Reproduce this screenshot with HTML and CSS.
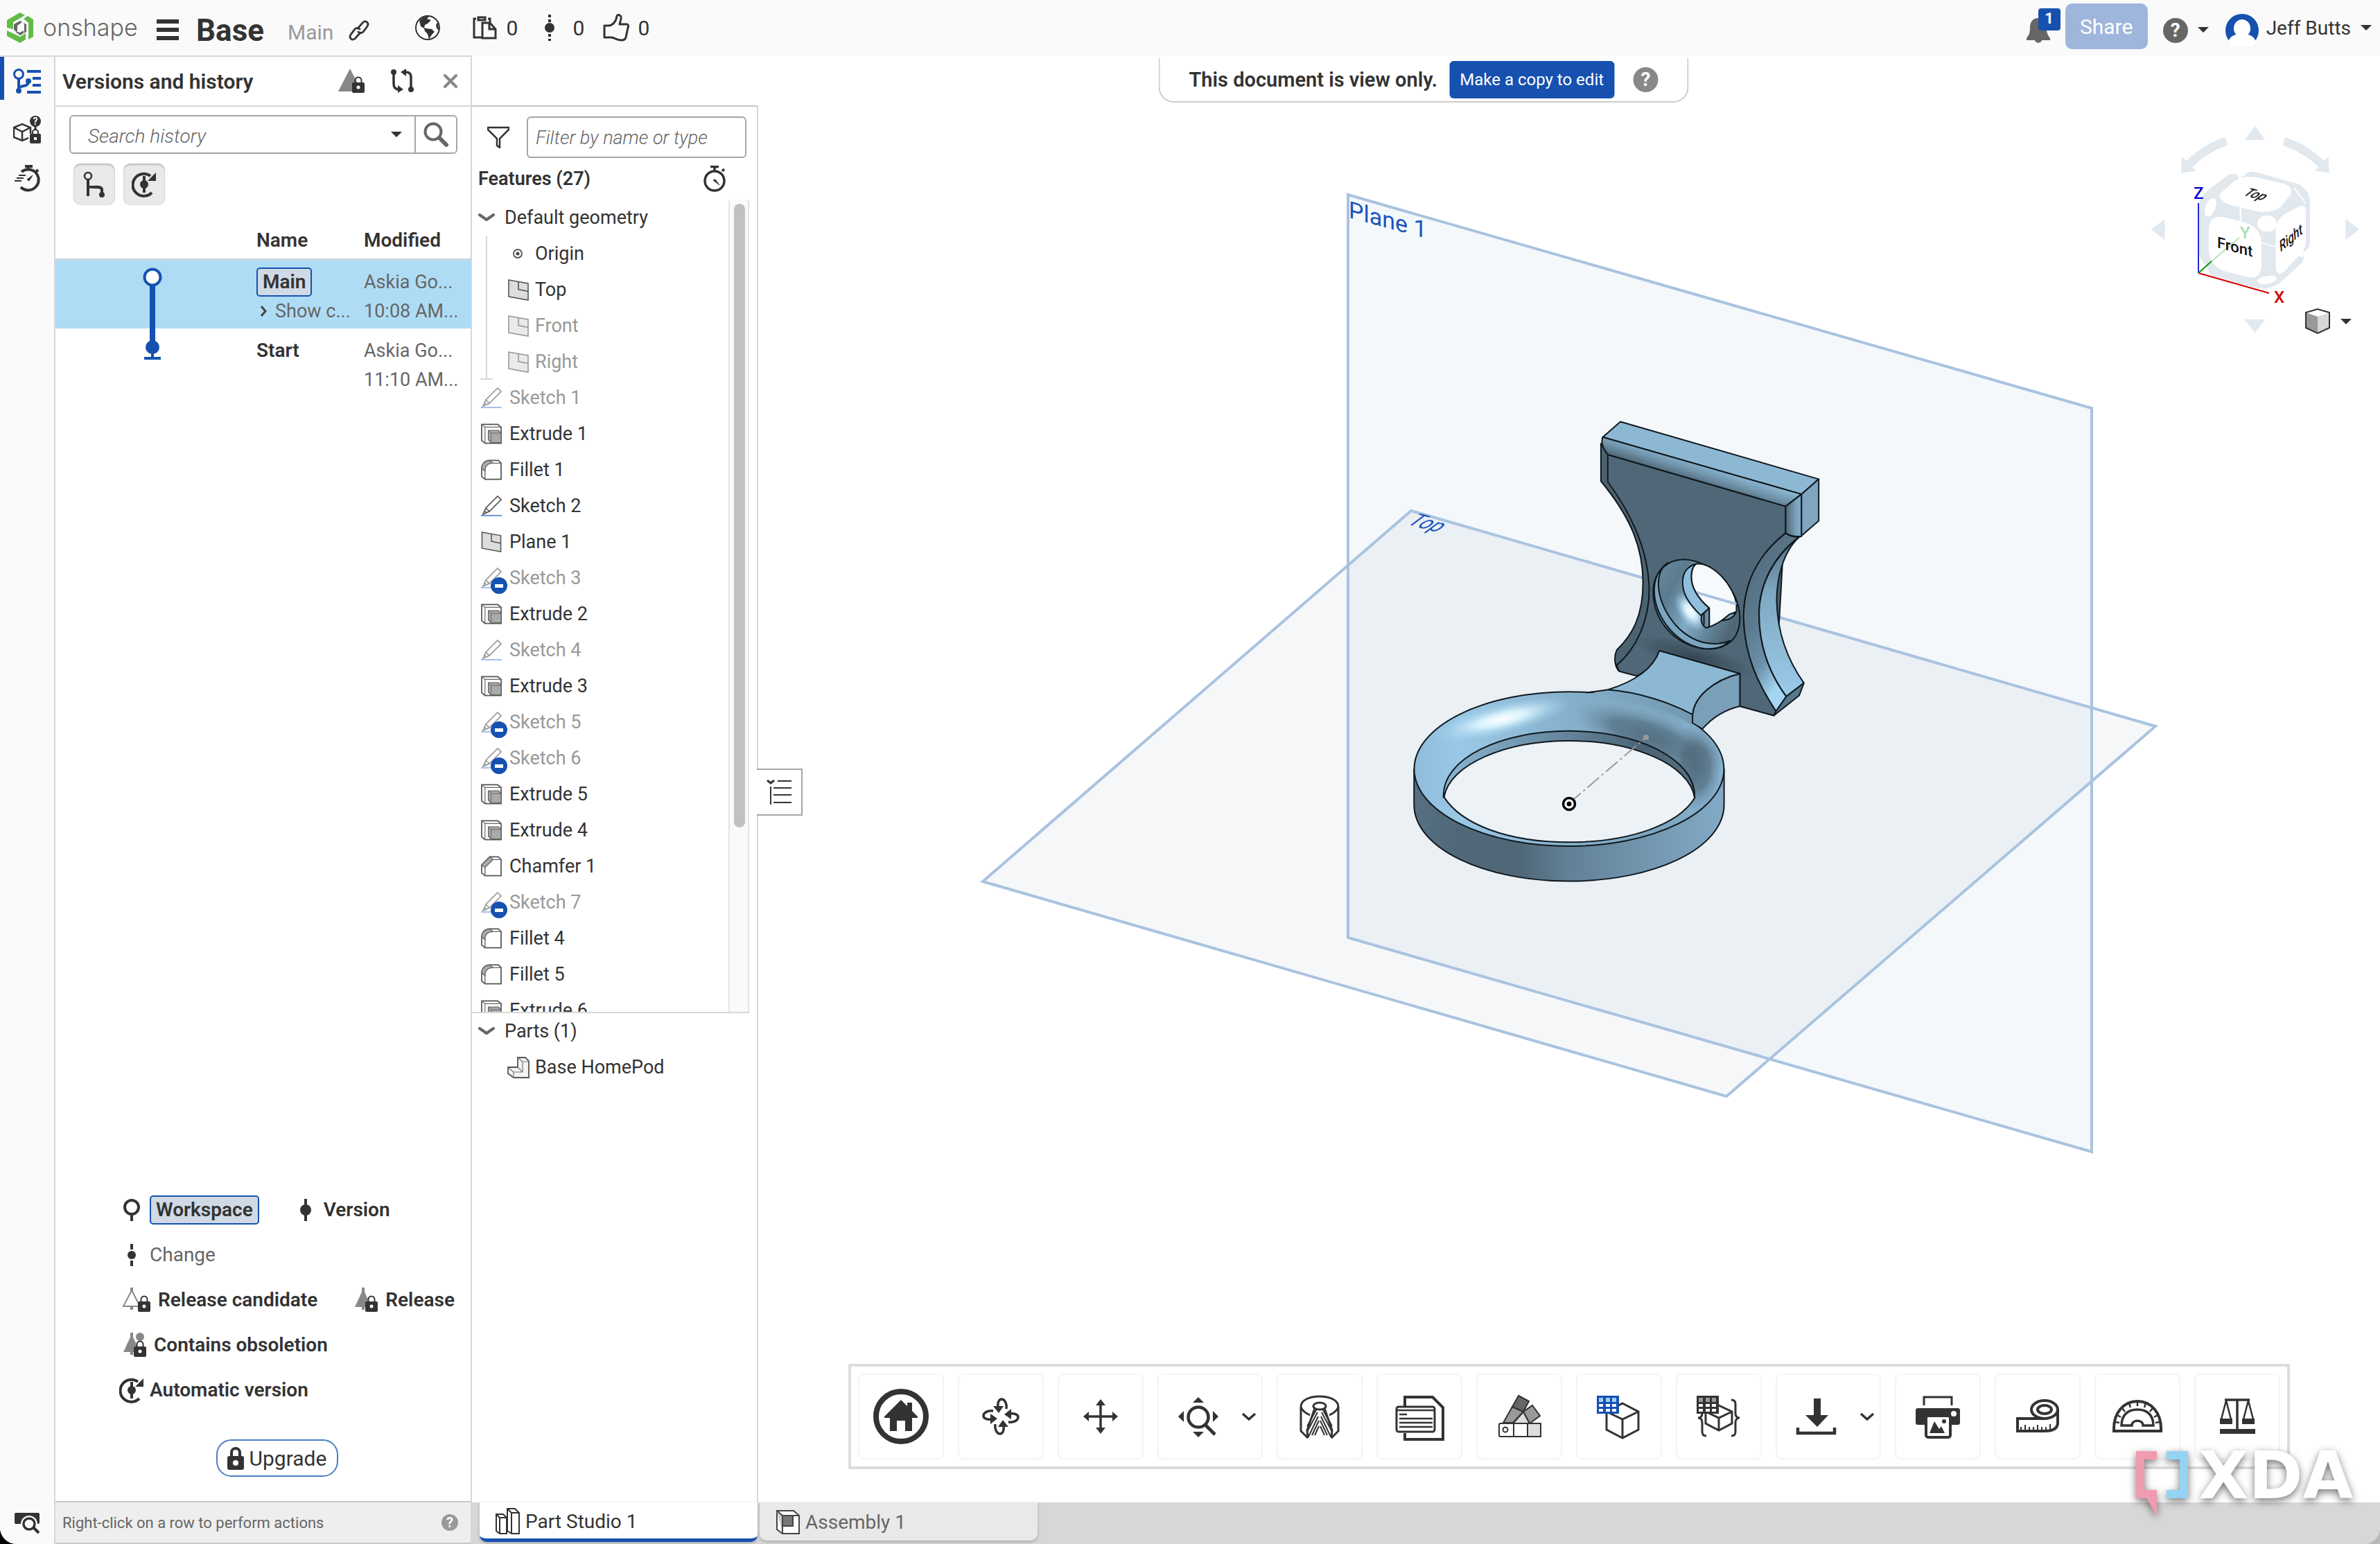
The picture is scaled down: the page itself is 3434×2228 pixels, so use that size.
FILE: index.html
```html
<!DOCTYPE html>
<html lang="en">
<head>
<meta charset="utf-8">
<title>Base | Part Studio 1</title>
<link rel="stylesheet" href="styles.css">
</head>
<body>
<svg class="sprite" aria-hidden="true">
  <defs>
    <symbol id="i-plane" viewBox="0 0 30 31"><path d="M1 1l28 5v24L1 25z" fill="#ddd" stroke="currentColor" stroke-width="1.6"/><path d="M15 3.500v11l14 3" fill="none" stroke="currentColor" stroke-width="1.600"/></symbol>
    <symbol id="i-sketch" viewBox="0 0 30 30"><path d="M3 27l4-9L24 1l5 5-17 17zM7 18l5 5M5 22l3 3" fill="none" stroke="currentColor" stroke-width="1.700"/><path d="M0 29h30" stroke="#4a7fd0" stroke-width="1.600"/></symbol>
    <symbol id="i-extrude" viewBox="0 0 31 30"><path d="M1 1h24l5 4v24H6l-5-4z" fill="#fff" stroke="#555" stroke-width="1.800"/><path d="M1 1l5 4v24M6 5h24" fill="none" stroke="#666" stroke-width="1.200"/><path d="M11 10h15l4 4v14H15l-4-4z" fill="#aaa" stroke="#666" stroke-width="1.400"/><path d="M11 10l4 4v14M15 14h15" fill="none" stroke="#666"/></symbol>
    <symbol id="i-fillet" viewBox="0 0 31 30"><path d="M1 14C1 6 6 1 13 1h13l4 4v24H6l-5-4z" fill="#fff" stroke="#555" stroke-width="1.800"/><path d="M1 13C1 6 6 1 13 1l5 4C10 5 6 9 6 17z" fill="#aaa" stroke="#666" stroke-width="1.400"/><path d="M17 5h13M6 16v13" stroke="#666" stroke-width="1.400"/></symbol>
    <symbol id="i-chamfer" viewBox="0 0 31 30"><path d="M1 13L13 1h13l4 4v24H6l-5-4z" fill="#fff" stroke="#555" stroke-width="1.800"/><path d="M1 13L13 1l5 4L6 17z" fill="#aaa" stroke="#666" stroke-width="1.400"/><path d="M17 5h13M6 16v13" stroke="#666" stroke-width="1.400"/></symbol>
    <symbol id="i-part" viewBox="0 0 32 31"><path d="M1 15h14V1h11l5 5v24H9l-8-6z" fill="#f3f3f3" stroke="#555" stroke-width="1.800"/><path d="M1 15l8 7v8M9 22h13V7h9M15 1l7 6M15 15l7 7" fill="none" stroke="#777" stroke-width="1.200"/></symbol>
    <symbol id="i-lock" viewBox="0 0 18 24"><path d="M4.500 11V6a4.500 4.500 0 0 1 9 0v5" fill="none" stroke="#333" stroke-width="2"/><rect y="9" width="18" height="15" rx="2" fill="#333"/><circle cx="9" cy="16" r="2.500" fill="#fff"/></symbol>
    <symbol id="i-auto" viewBox="0 0 36 38"><path d="M29 31A16 16 0 1 1 27 7" fill="none" stroke="#333" stroke-width="4"/><path d="M35 2v12H23z" fill="#333"/><path d="M18 7v24" stroke="#333" stroke-width="4"/><circle cx="18" cy="19" r="6" fill="#333"/></symbol>
    <symbol id="i-chev" viewBox="0 0 24 14"><path d="M2 3l10 7 10-7" fill="none" stroke="#666" stroke-width="4" stroke-linecap="round" stroke-linejoin="round"/></symbol>
    <symbol id="i-watch" viewBox="0 0 34 38"><circle cx="17" cy="22" r="14" fill="none" stroke="#333" stroke-width="3.500"/><path d="M11 1.500h12M17 2v6M28 8l3-3" stroke="#333" stroke-width="3.500"/><path d="M15 21l3-1 6 8z" fill="#333" stroke="#333"/></symbol>
  </defs>
</svg>
<div class="app">
  <header class="topbar">
    <a class="brand" href="#"><svg width="40" height="44" viewBox="0 0 40 44"><path d="M1 22V11L20 0l7 4-17 10v10z" fill="#62bb46"/><path d="M25 9l6-4 8 5v25l-7 4V15z" fill="#62bb46"/><path d="M1 26l19 9 8-5v9l-8 5L1 34z" fill="#62bb46"/><path d="M11 17l9-5 3 2-7 5v9l-5-3zM25 15l4 2v11l-3 2V18zM12 27l8 2 5-3v4l-5 3z" fill="#666"/></svg><span>onshape</span></a>
    <button class="plain menu" aria-label="Menu"><svg width="32" height="30"><path d="M0 3h32M0 15h32M0 27h32" stroke="#333" stroke-width="6"/></svg></button>
    <h1>Base</h1><span class="branch">Main</span>
    <button class="plain link" aria-label="Copy link"><svg width="30" height="30" viewBox="0 0 30 30" fill="none" stroke="#333" stroke-width="2.800" stroke-linecap="round"><path d="M13 12l8-9c4-3 9 1 6 6l-6 8c-2 2-5 2-7 0"/><path d="M17 18l-8 9c-4 3-9-1-6-6l6-8c2-2 5-2 7 0"/></svg></button>
    <svg class="globe" width="38" height="38" viewBox="0 0 38 38"><circle cx="19" cy="19" r="17" fill="#fff" stroke="#333" stroke-width="2"/><path d="M7 9c4-5 9-7 14-6l-3 3 6 2-5 5-4 2-1 4 3 1 8 1 4 4-4 4-4 7-2-8-4-4-1-4-5-3z" fill="#333"/><path d="M34 10l-3 5 1 5 3 3z" fill="#333"/></svg>
    <span class="stat"><svg width="36" height="34" viewBox="0 0 36 34" fill="none" stroke="#333" stroke-width="3"><path d="M5 4H2v27h12M22 4h3v5"/><path d="M8 2h10v4H8z"/><path d="M14 10h11l8 9v13H14zM24 10v9h9"/></svg>0</span>
    <span class="stat stat-b"><svg width="14" height="38" viewBox="0 0 14 38"><path d="M7 0v38" stroke="#333" stroke-width="4" stroke-dasharray="4 3"/><circle cx="7" cy="19" r="7" fill="#333"/></svg>0</span>
    <span class="stat stat-c"><svg width="38" height="40" viewBox="0 0 38 40"><path d="M2 17h6c5 0 11-5 12-14 2-3 7-1 6 4l-2 8h11c2 1 2 3 1 5l-3 14c-1 3-3 4-6 4-6 0-10-3-14-4H2z" fill="none" stroke="#333" stroke-width="3" stroke-linejoin="round"/></svg>0</span>
    <span class="spacer"></span>
    <button class="plain bell" aria-label="Notifications"><svg width="34" height="36" viewBox="0 0 34 36"><path d="M17 0c-8 0-12 6-12 13 0 8-1 11-5 16v3h12c1 5 9 5 10 0h12v-3c-4-5-5-8-5-16C29 6 25 0 17 0z" fill="#666"/></svg><span class="badge">1</span></button>
    <button class="share">Share</button>
    <button class="help dark" aria-label="Help">?</button><i class="caret"></i>
    <svg class="avatar" width="48" height="48" viewBox="0 0 48 48"><circle cx="24" cy="24" r="24" fill="#1651b0"/><path d="M4 42c1-9 8-13 20-13s19 4 20 13c-8 8-32 8-40 0z" fill="#fff"/><ellipse cx="24" cy="21" rx="12" ry="13" fill="#fff"/></svg>
    <button class="plain user">Jeff Butts</button><i class="caret"></i>
  </header>
  <div class="main">
    <nav class="rail">
      <button class="plain active" aria-label="Versions and history"><svg width="40" height="40" viewBox="0 0 40 40" stroke="#1651b0" fill="none"><circle cx="8" cy="10" r="6.500" stroke-width="3"/><path d="M8 17v18M8 31c1-6 13-1 14-10" stroke-width="4"/><circle cx="8" cy="34" r="4" fill="#1651b0" stroke="none"/><circle cx="22" cy="20" r="4" fill="#1651b0" stroke="none"/><path d="M20 6h20M28 16h12M28 26h12M20 36h20" stroke-width="4"/></svg></button>
      <button class="plain" aria-label="Part lookup"><svg width="40" height="40" viewBox="0 0 40 40"><path d="M1 17l12-5 12 5v14l-12 5-12-5zM1 17l12 6 12-6M13 23v13" fill="none" stroke="#333" stroke-width="2.500"/><path d="M22 26h18v14H22z" fill="#fafafa"/><circle cx="32" cy="8" r="8" fill="#333"/><text x="32" y="13" class="tiny-q">?</text><path d="M32 16v4" stroke="#333" stroke-width="3"/><path d="M28 28v-4a4 4 0 0 1 8 0v4" fill="none" stroke="#333" stroke-width="2"/><rect x="24" y="26" width="16" height="14" rx="2" fill="#333"/><rect x="30" y="31" width="4" height="4" fill="#fff"/></svg></button>
      <button class="plain" aria-label="Performance"><svg width="40" height="40" viewBox="0 0 40 40"><path d="M12 11A15 15 0 1 1 11 33" fill="none" stroke="#333" stroke-width="4"/><path d="M17 3h11M22 3v5M33 11l3-3" stroke="#333" stroke-width="4"/><path d="M8 16h10M5 20h10M2 24h10" stroke="#333" stroke-width="2"/><path d="M20 22l8-6-5 8z" fill="#333" stroke="#333"/></svg></button>
      <button class="plain rail-end" aria-label="Tab search"><svg width="38" height="34" viewBox="0 0 38 34"><rect x="1" y="2" width="36" height="16" rx="2" fill="#333"/><circle cx="22" cy="18" r="12" fill="#fafafa"/><circle cx="22" cy="18" r="8" fill="none" stroke="#333" stroke-width="3.500"/><path d="M28 23l8 8" stroke="#333" stroke-width="4"/></svg></button>
    </nav>
    <aside class="versions">
      <div class="vhead"><h2>Versions and history</h2>
        <svg width="40" height="36" viewBox="0 0 40 36"><path d="M17 0l17 33H0z" fill="#888"/><use href="#i-lock" x="20" y="11" width="18" height="24"/></svg>
        <svg class="cmp" width="34" height="36" viewBox="0 0 34 36" fill="none" stroke="#333" stroke-width="3.500"><path d="M4 4v18q0 8 8 8M29 30V12q0-7-8-7"/><circle cx="4" cy="5" r="4" fill="#333" stroke="none"/><circle cx="29" cy="30" r="4" fill="#333" stroke="none"/><path d="M10 24l8 6-8 5zM22 0l-8 5 8 6z" fill="#333" stroke="none"/></svg>
        <button class="plain close" aria-label="Close"><svg width="20" height="20"><path d="M2 2l16 16M18 2L2 18" stroke="#888" stroke-width="4" stroke-linecap="round"/></svg></button>
      </div>
      <div class="search"><input type="text" placeholder="Search history" aria-label="Search history"><i class="caret"></i><button class="plain" aria-label="Search"><svg width="38" height="38" viewBox="0 0 38 38" fill="none" stroke="#666"><circle cx="15" cy="15" r="11.500" stroke-width="4"/><path d="M24 24l10 10" stroke-width="6" stroke-linecap="round"/></svg></button></div>
      <div class="toggles">
        <button aria-label="Show branches"><svg width="32" height="38" viewBox="0 0 32 38" fill="none" stroke="#333"><circle cx="7" cy="7" r="5" stroke-width="2.500"/><path d="M7 12v24M7 22c4 3 18-2 20 4v8" stroke-width="4"/><circle cx="27" cy="34" r="4" fill="#333" stroke="none"/></svg></button>
        <button aria-label="Show automatic versions"><svg width="36" height="38"><use href="#i-auto"/></svg></button>
      </div>
      <table class="history">
        <thead><tr><th class="graph"></th><th>Name</th><th>Modified</th></tr></thead>
        <tbody>
          <tr class="current"><td class="graph"><svg width="28" height="140" viewBox="0 0 28 140"><path d="M14 24v100" stroke="#1651b0" stroke-width="8"/><circle cx="14" cy="14" r="11.500" fill="#fff" stroke="#1651b0" stroke-width="4"/><circle cx="14" cy="115" r="10" fill="#1651b0"/><path d="M2 131h24" stroke="#1651b0" stroke-width="4"/><path d="M14 120v10" stroke="#1651b0" stroke-width="4"/></svg></td>
            <td><span class="tag">Main</span><br><svg class="more" width="10" height="18"><path d="M2 2l6 7-6 7" fill="none" stroke="#444" stroke-width="3"/></svg>Show c...</td><td>Askia Go...<br>10:08 AM...</td></tr>
          <tr><td></td><td><b>Start</b></td><td>Askia Go...<br>11:10 AM...</td></tr>
        </tbody>
      </table>
      <ul class="legend">
        <li><svg width="24" height="32" viewBox="0 0 24 32"><circle cx="12" cy="12" r="10" fill="none" stroke="#333" stroke-width="4"/><path d="M12 22v10" stroke="#333" stroke-width="4"/></svg><b class="tag">Workspace</b><svg class="second" width="16" height="32"><path d="M8 0v32" stroke="#333" stroke-width="4"/><circle cx="8" cy="16" r="8" fill="#333"/></svg><b>Version</b></li>
        <li><svg width="24" height="32"><path d="M12 0v8M12 24v8" stroke="#333" stroke-width="4"/><circle cx="12" cy="16" r="6" fill="#333"/></svg><span>Change</span></li>
        <li class="rel"><svg width="42" height="36" viewBox="0 0 42 36"><path d="M14 0v6M14 28v4" stroke="#888" stroke-width="4"/><path d="M14 4L2 27h24z" fill="#fff" stroke="#888" stroke-width="2"/><use href="#i-lock" x="23" y="11" width="18" height="24"/></svg><b>Release candidate</b><svg class="third" width="34" height="36" viewBox="0 0 34 36"><path d="M12 0v32" stroke="#888" stroke-width="4"/><path d="M12 2L0 28h24z" fill="#888"/><use href="#i-lock" x="15" y="11" width="18" height="24"/></svg><b>Release</b></li>
        <li class="obs"><svg width="34" height="36" viewBox="0 0 34 36"><path d="M12 0v32" stroke="#888" stroke-width="4"/><path d="M12 2L0 28h24z" fill="#888"/><circle cx="24" cy="6" r="6" fill="#888"/><use href="#i-lock" x="15" y="11" width="18" height="24"/></svg><b>Contains obsoletion</b></li>
        <li class="aut"><svg width="36" height="38"><use href="#i-auto"/></svg><b>Automatic version</b></li>
      </ul>
      <button class="upgrade"><svg width="24" height="34" viewBox="0 0 24 34"><path d="M6 16V9a6 6 0 0 1 12 0v7" fill="none" stroke="#333" stroke-width="4"/><rect y="14" width="24" height="20" rx="3" fill="#333"/><circle cx="12" cy="24" r="4" fill="#fff"/></svg>Upgrade</button>
      <footer class="hint"><span>Right-click on a row to perform actions</span><button class="help small" aria-label="Help">?</button></footer>
    </aside>
    <div class="work">
      <div class="studio">
        <aside class="features">
          <div class="filter"><svg width="32" height="32" viewBox="0 0 32 32"><path d="M1 2h30v3L18 18v13l-4-3V18L1 5z" fill="none" stroke="#333" stroke-width="2.500"/></svg><input type="text" placeholder="Filter by name or type" aria-label="Filter by name or type"></div>
          <div class="fhead"><h3>Features (27)</h3><svg width="34" height="38"><use href="#i-watch"/></svg></div>
          <div class="scroller">
            <ul class="tree">
              <li class="group"><svg width="24" height="14"><use href="#i-chev"/></svg>Default geometry</li>
              <li class="nested"><ul>
                <li><svg width="30" height="31" viewBox="0 0 30 31"><circle cx="14" cy="15" r="6" fill="none" stroke="#555" stroke-width="1.800"/><circle cx="14" cy="15" r="2.500" fill="#444"/></svg>Origin</li>
                <li><svg width="30" height="31"><use href="#i-plane"/></svg>Top</li>
                <li class="off"><svg width="30" height="31"><use href="#i-plane"/></svg>Front</li>
                <li class="off"><svg width="30" height="31"><use href="#i-plane"/></svg>Right</li>
              </ul></li>
              <li class="off"><svg width="30" height="30"><use href="#i-sketch"/></svg>Sketch 1</li>
              <li><svg width="30" height="30"><use href="#i-extrude"/></svg>Extrude 1</li>
              <li><svg width="30" height="30"><use href="#i-fillet"/></svg>Fillet 1</li>
              <li><svg width="30" height="30"><use href="#i-sketch"/></svg>Sketch 2</li>
              <li><svg width="30" height="30"><use href="#i-plane"/></svg>Plane 1</li>
              <li class="off err"><svg width="30" height="30"><use href="#i-sketch"/></svg>Sketch 3</li>
              <li><svg width="30" height="30"><use href="#i-extrude"/></svg>Extrude 2</li>
              <li class="off"><svg width="30" height="30"><use href="#i-sketch"/></svg>Sketch 4</li>
              <li><svg width="30" height="30"><use href="#i-extrude"/></svg>Extrude 3</li>
              <li class="off err"><svg width="30" height="30"><use href="#i-sketch"/></svg>Sketch 5</li>
              <li class="off err"><svg width="30" height="30"><use href="#i-sketch"/></svg>Sketch 6</li>
              <li><svg width="30" height="30"><use href="#i-extrude"/></svg>Extrude 5</li>
              <li><svg width="30" height="30"><use href="#i-extrude"/></svg>Extrude 4</li>
              <li><svg width="30" height="30"><use href="#i-chamfer"/></svg>Chamfer 1</li>
              <li class="off err"><svg width="30" height="30"><use href="#i-sketch"/></svg>Sketch 7</li>
              <li><svg width="30" height="30"><use href="#i-fillet"/></svg>Fillet 4</li>
              <li><svg width="30" height="30"><use href="#i-fillet"/></svg>Fillet 5</li>
              <li><svg width="30" height="30"><use href="#i-extrude"/></svg>Extrude 6</li>
            </ul>
            <div class="track"><div class="thumb"></div></div>
          </div>
          <ul class="tree parts">
            <li class="group"><svg width="24" height="14"><use href="#i-chev"/></svg>Parts (1)</li>
            <li class="part"><svg width="32" height="31"><use href="#i-part"/></svg>Base HomePod</li>
          </ul>
        </aside>
        <main class="canvas">
          <svg class="scene" viewBox="1094 80 2340 2088">
            <defs>
              <linearGradient id="side" x1="0" x2="1"><stop offset="0" stop-color="#567083"/><stop offset=".15" stop-color="#4f6777"/><stop offset=".34" stop-color="#4f6777"/><stop offset=".5" stop-color="#618197"/><stop offset=".75" stop-color="#7396af"/><stop offset="1" stop-color="#82aac6"/></linearGradient>
              <linearGradient id="top" x1="0" x2="1"><stop offset="0" stop-color="#8ebcda"/><stop offset=".15" stop-color="#9ac8e6"/><stop offset=".55" stop-color="#83adc8"/><stop offset=".8" stop-color="#7ca5be"/><stop offset="1" stop-color="#8ab6d3"/></linearGradient>
              <linearGradient id="join" x1="0" x2="1"><stop offset="0" stop-color="#82abc6"/><stop offset="1" stop-color="#7399b1"/></linearGradient>
              <linearGradient id="wall" x1="0" x2="1"><stop offset="0" stop-color="#8ab5d3"/><stop offset=".5" stop-color="#63839a"/><stop offset=".8" stop-color="#4b6373"/><stop offset="1" stop-color="#55707f"/></linearGradient>
              <radialGradient id="glow"><stop offset="0" stop-color="#fff"/><stop offset=".35" stop-color="#dff6ff" stop-opacity=".9"/><stop offset="1" stop-color="#9dd0ee" stop-opacity="0"/></radialGradient>
              <radialGradient id="shade"><stop offset="0" stop-color="#486071"/><stop offset=".5" stop-color="#4f6777" stop-opacity=".85"/><stop offset="1" stop-color="#6b8da4" stop-opacity="0"/></radialGradient>
              <linearGradient id="roll" gradientUnits="userSpaceOnUse" x1="1075" y1="228" x2="1058" y2="285"><stop offset="0" stop-color="#8ab5d1"/><stop offset=".5" stop-color="#7194ab"/><stop offset="1" stop-color="#4f6777"/></linearGradient>
              <linearGradient id="rollR" x1="0" x2="1"><stop offset="0" stop-color="#4f6777"/><stop offset=".7" stop-color="#7da6c1"/><stop offset="1" stop-color="#80a9c4"/></linearGradient>
              <linearGradient id="band" x1="0" y1="0" x2=".4" y2="1"><stop offset="0" stop-color="#4f6777"/><stop offset=".5" stop-color="#5c7b8f"/><stop offset=".75" stop-color="#6c91aa"/><stop offset=".95" stop-color="#a4d5f2"/></linearGradient>
              <linearGradient id="edge" x1="0" y1="0" x2="0" y2="1"><stop offset="0" stop-color="#55707f"/><stop offset=".35" stop-color="#7ea8c2"/><stop offset="1" stop-color="#9bcbea"/></linearGradient>
              <linearGradient id="bore" x1="0" y1="0" x2="1" y2=".6"><stop offset="0" stop-color="#6a8ba0"/><stop offset=".3" stop-color="#5c7b8f"/><stop offset=".6" stop-color="#7faac6"/><stop offset="1" stop-color="#4f6777"/></linearGradient>
              <radialGradient id="dim"><stop offset="0" stop-color="#222d35" stop-opacity=".55"/><stop offset="1" stop-color="#222d35" stop-opacity="0"/></radialGradient>
              <clipPath id="ringclip"><ellipse cx="636" cy="1134" rx="500" ry="230"/></clipPath>
              <clipPath id="boreclip"><path d="M908 600C910 550 950 510 1010 510C1100 515 1188 600 1188 685C1188 750 1140 777 1090 777C990 775 905 700 908 600z"/></clipPath>
            </defs>
            <path d="M1945 281L3018 589V1662L1945 1353z" fill="#f4f8fb"/>
            <path d="M2036 737L3110 1048L2491 1582L1418 1272z" fill="#546e96" fill-opacity=".055"/>
            <path d="M1945 281L3018 589V1662L1945 1353zM2036 737L3110 1048L2491 1582L1418 1272z" fill="none" stroke="#a9c3e0" stroke-width="4"/>
            <text class="plane-label" transform="translate(1946 314) skewY(15)">Plane 1</text>
            <text class="plane-label top-label" transform="translate(2028 756) rotate(15) skewX(-38)">Top</text>
            <g class="solid" transform="translate(1980 560) scale(.44643 .48469)">
              <path d="M739 165V277C840 390 875 480 875 580C875 680 840 735 790 780C780 800 783 830 798 843L855 857L928 782L1188 850V947L1298 975L1336 352L761 198z" fill="#4b6271"/>
              <path d="M761 198L1336 352V432C1240 500 1200 590 1200 685C1203 800 1250 885 1305 962L1298 975L1188 947V850L928 782Q905 835 855 857L798 843L790 825C855 775 895 690 895 600C893 500 850 390 761 279z" fill="#4f6777"/>
              <ellipse cx="1040" cy="800" rx="200" ry="40" fill="url(#dim)" stroke="none" transform="rotate(14 1040 800)"/>
              <path d="M802 100L1443 271L1387 316L745 146z" fill="#8cb8d4"/>
              <path d="M745 146L1387 316L1336 352L761 198C742 175 738 160 745 146z" fill="url(#roll)"/>
              <path d="M1443 271V395L1387 440V316z" fill="#7fa5c0"/>
              <path d="M1387 316V442Q1358 444 1336 432V352z" fill="url(#rollR)"/>
              <path d="M1336 432C1240 500 1200 590 1200 685C1203 800 1250 885 1305 962L1338 918C1280 845 1250 760 1250 670C1252 570 1310 490 1380 443Q1355 444 1336 432z" fill="url(#band)"/>
              <path d="M1380 443C1325 490 1307 570 1307 635C1310 740 1350 820 1395 878L1338 918C1280 845 1250 760 1250 670C1252 580 1300 500 1380 443z" fill="url(#edge)"/>
              <path d="M1395 878L1380 915L1298 975L1305 962L1338 918z" fill="#58778b"/>
              <path d="M908 600C910 550 950 510 1010 510C1100 515 1188 600 1188 685C1188 750 1140 777 1090 777C990 775 905 700 908 600z" fill="url(#bore)"/>
              <g clip-path="url(#boreclip)"><ellipse cx="1028" cy="665" rx="38" ry="70" fill="url(#glow)" stroke="none" transform="rotate(-38 1028 665)"/></g>
              <path d="M955 520C905 555 920 640 980 705C1040 765 1110 770 1155 752C1120 790 1020 790 950 705C900 640 895 560 955 520z" fill="#7ba5c0"/>
              <path d="M1045 524C1100 515 1170 590 1177 645V665L1150 677C1125 697 1105 707 1080 714L1089 710V655C1050 625 1030 590 1031 560Q1032 535 1045 524z" fill="#f7fafc"/>
              <path d="M1045 608L1177 643" stroke="#a9c3e0" class="planeline"/>
              <path d="M1045 524Q1032 535 1031 560C1030 590 1050 625 1089 655L1062 677C1020 640 1002 610 1003 575Q1005 535 1045 524z" fill="#8fbfdd"/>
              <path d="M1089 655V710L1080 714C1068 708 1060 695 1065 675z" fill="#6a8ea6"/>
              <path d="M1072 668V705M1130 692L1155 673L1175 668Q1165 690 1130 692z" fill="#7ba3bd"/>
              <path d="M135 1134V1240C135 1370 360 1468 636 1468C912 1468 1137 1370 1137 1240V1134z" fill="url(#side)"/>
              <ellipse cx="636" cy="1134" rx="500.500" ry="230" fill="url(#top)"/>
              <g clip-path="url(#ringclip)" class="bare">
                <ellipse cx="900" cy="1040" rx="260" ry="70" fill="url(#shade)" opacity=".75" transform="rotate(18 900 1040)"/>
                <ellipse cx="1045" cy="1130" rx="90" ry="130" fill="url(#shade)" opacity=".8"/>
                <ellipse cx="420" cy="985" rx="230" ry="48" fill="url(#glow)" transform="rotate(-13 420 985)"/>
              </g>
              <path d="M700 910L762 898C860 905 960 935 1035 972V1003C960 962 860 930 700 914z" fill="url(#join)" stroke="none"/>
              <path d="M690 907Q725 903 762 898" fill="none"/>
              <path d="M230 1218C225 1100 420 1021 636 1021C852 1021 1045 1100 1042 1220z" fill="url(#wall)"/>
              <path d="M232 1218C250 1120 430 1050 636 1050C842 1050 1025 1120 1042 1220C990 1300 830 1352 636 1352C440 1352 290 1300 232 1218z" fill="#edf2f7"/>
              <path d="M1188 850V947C1130 960 1090 990 1067 1015L1035 997V972C1040 920 1100 870 1188 850z" fill="#7a9fb9"/>
              <path d="M928 782L1188 850C1100 870 1040 920 1035 972C960 935 860 905 762 898C860 870 910 830 928 782z" fill="#8cb8d4"/>
            </g>
            <path d="M2264 1159L2375 1064" stroke="#999" stroke-width="2" stroke-dasharray="22 5 3 5"/>
            <circle cx="2375" cy="1064" r="4" fill="#999"/>
            <circle cx="2264" cy="1160" r="8.500" fill="#fff" stroke="#000" stroke-width="3.500"/><circle cx="2264" cy="1160" r="3.500"/>
          </svg>
          <div class="notice"><b>This document is view only.</b><button>Make a copy to edit</button><button class="help" aria-label="Help">?</button></div>
          <svg class="viewcube" width="320" height="320" viewBox="3100 170 320 320">
            <g transform="translate(2800 0) scale(.40434 .33163)" fill="#e1e8ee">
              <path d="M1122 546l37 60h-74zM1122 1445l37-59h-74zM752 995l48-45v91zM1493 995l-48-45v91z"/>
              <path d="M1016 593l8 36q-75 33-126 94l15 18-55 8 3-70 16 18q60-72 139-104zM1229 593l-8 36q75 33 128 94l-15 17 53 9-3-70-16 18q-60-72-139-104z"/>
              <path d="M1045 753q17 1 20 20L1085 760q12-20 35-16l160 55q38 28 38 80v170q-2 35-22 44v22q-2 20-10 30l-78 85q-30 25-75 22l-160-55q-20-12-25-45-22-20-25-55V880q5-25 20-45l77-72q14-10 25-10z"/>
              <path d="M1070 768l12 10-6 12-12-8zM1290 1092l12 2-8 22-14-4z" fill="#fff"/>
              <path d="M1095 766q20-2 40 5l90 25q30 14 25 45l-35 55q-30 28-80 22l-105-30q-38-18-35-45l50-55q20-20 50-22z" fill="#fff"/>
              <path d="M957 990q2-50 45-50l75 22q65 20 68 90v100q-2 60-45 52l-90-28q-50-25-53-90z" fill="#fff"/>
              <path d="M1196 990q5-40 30-60l50-33q25-15 27 15v140q-2 40-30 65l-50 65q-25 18-27-20z" fill="#fff"/>
              <ellipse cx="963" cy="899" rx="18" ry="41" fill="#fff" transform="rotate(15 963 899)"/><circle cx="1165" cy="970" r="35" fill="#fff"/><ellipse cx="1165" cy="1215" rx="35" ry="17" fill="#fff" transform="rotate(-12 1165 1215)"/>
              <path d="M1070 900v65M1145 1053l50 18M1262 815l40 65" fill="none" stroke="#fff" stroke-width="5"/>
            </g>
            <path d="M3172 292V393" stroke="#2424dd" stroke-width="2"/><path d="M3172 393l102 29" stroke="#d40000" stroke-width="2"/><path d="M3172 393l19-17" stroke="#0a9a0a" stroke-width="2"/><path d="M3191 376l40-34" stroke="#b4e3b4" stroke-width="2"/>
            <text x="3165" y="286" class="axis" fill="#0000d4">Z</text><text x="3281" y="436" class="axis" fill="#d40000">X</text><text x="3232" y="343" class="axis" fill="#a9dfa9">Y</text>
            <text class="face" transform="translate(3235 280) rotate(16) skewX(-36)">Top</text>
            <text class="face front" transform="translate(3199 356) skewY(15)">Front</text>
            <text class="face" transform="translate(3290 363) rotate(-40) skewX(-35)">Right</text>
          </svg>
          <button class="plain shading" aria-label="Shading"><svg width="38" height="38" viewBox="0 0 38 38"><path d="M2 6l17-4 17 4v22L19 36 2 28z" fill="#fff"/><path d="M2 6l17 6v24L2 28z" fill="#999"/><path d="M36 6l-17 6v24l17-8z" fill="#d7d7d7"/><path d="M2 6l17-5 17 5v22L19 36 2 28z" fill="none" stroke="#333" stroke-width="2"/></svg><i class="caret"></i></button>
          <button class="handle" aria-label="Toggle feature list"><svg width="36" height="36" viewBox="0 0 36 36" fill="none" stroke="#333" stroke-width="2"><path d="M1 1l5 4 5-4" stroke-width="3"/><path d="M16 2h20M10 12h26M10 22h26M10 33h26M6 10v26"/></svg></button>
          <div class="toolbar">
            <button aria-label="Home"><svg viewBox="-50 -50 100 100"><circle r="36" fill="none" stroke="#333" stroke-width="8"/><path d="M0-24L9-15V-20h7v12L24 0v2h-8v19h-10V6h-12v15h-10V2h-8V0z" fill="#333"/></svg></button>
            <button aria-label="Rotate"><svg viewBox="-50 -50 100 100"><g id="arc" fill="none" stroke="#333" stroke-width="3.500"><path d="M8-11C9-20 5-25 1-25S-5-19-4-14"/><path d="M-11-15H4L-3-5z" fill="#333" stroke="none"/></g><use href="#arc" transform="rotate(90)"/><use href="#arc" transform="rotate(180)"/><use href="#arc" transform="rotate(270)"/></svg></button>
            <button aria-label="Pan"><svg viewBox="-50 -50 100 100"><path d="M-20 0h40M0-20v40" stroke="#333" stroke-width="3.500"/><path d="M0-25l7 9H-7zM0 25l7-9H-7zM-25 0l8-7V7zM25 0l-8-7V7z" fill="#333"/></svg></button>
            <button class="wide" aria-label="Zoom"><svg viewBox="-76 -50 152 100"><circle cx="-17" cy="1" r="14.500" fill="none" stroke="#333" stroke-width="4.500"/><path d="M-7 12L7 26" stroke="#333" stroke-width="5"/><path d="M-17-28l8 8h-16zM-17 30l8-8h-16zM-46 0l8-8V8zM12 0L4-8V8z" fill="#333"/><path d="M47-4l9 8 9-8" fill="none" stroke="#333" stroke-width="3.500"/></svg></button>
            <button aria-label="Section view"><svg viewBox="-50 -50 100 100" fill="none" stroke="#333" stroke-width="3"><path d="M-17 31L-27 21V-14C-27-24-14-29 0-29S27-24 27-14V21L17 31M-27-14q2 7 13 12M27-14q-2 7-13 12"/><ellipse cy="-15" rx="9" ry="5"/><path d="M-17 31L-18 20-7-12M17 31L18 20 7-12"/><path d="M-4-11L-18 14M-3-6L-18 22M-2 0L-16 29M-1 6L-11 27M-1 14L-7 27M4-11L18 14M3-6L18 22M2 0L16 29M1 6L11 27M1 14L7 27" stroke-width="2"/></svg></button>
            <button aria-label="Sheets"><svg viewBox="-50 -50 100 100" fill="none" stroke="#333" stroke-width="4"><path d="M-21-15v-13h40l15 15v46h-55V24"/><rect x="-33" y="-14" width="55" height="36" rx="3" fill="#fff" stroke-width="3"/><path d="M-33-9h55M-29-3h11M-29 3h48M-29 9h48M-29 15h48" stroke-width="2.500"/></svg></button>
            <button aria-label="Appearance"><svg viewBox="-50 -50 100 100" stroke="#333" stroke-width="2"><path d="M-8 9L6-7l9 17h-27z" fill="#ddd"/><path d="M-10-14L6-7-9 9h-14z" fill="#999"/><path d="M-1-30l15 8L6-7-10-14z" fill="#666"/><path d="M19-16L30-1 15 10 6-7z" fill="#999"/><rect x="-29" y="10" width="60" height="19" rx="2" fill="#fff"/><path d="M12 10h19v19H12z" fill="#ddd"/><path d="M-8 10v19"/><circle cx="-20" cy="19" r="3.500" fill="none"/></svg></button>
            <button aria-label="Configuration"><svg viewBox="-50 -50 100 100"><path d="M5-19L28-7v26L5 31l-23-12V-7zM-18-7L5 4 28-7M5 4v27" fill="#fff" stroke="#333" stroke-width="3"/><path d="M-32-30H0v26h-32z" fill="#1651b0"/><path d="M-29-27h6v6h-6zM-19-27h6v6h-6zM-10-27h6v6h-6z" fill="#9bd0f5"/><path d="M-29-18h6v4h-6zM-19-18h6v4h-6zM-10-18h6v4h-6zM-29-11h6v4h-6zM-19-11h6v4h-6zM-10-11h6v4h-6z" fill="#fff"/></svg></button>
            <button aria-label="Variables"><svg viewBox="-50 -50 100 100"><path d="M0-16L19-7V10L0 20l-19-10V-7zM-19-7L0 2 19-7M0 2v18" fill="#fff" stroke="#333" stroke-width="3"/><path d="M18-24q6 0 6 6v13q0 7 6 7-6 0-6 7v13q0 6-6 6M-24-5q0 7-6 7 6 0 6 7v13q0 6 6 6" fill="none" stroke="#333" stroke-width="3"/><path d="M-32-30H0v26h-32z" fill="#333"/><path d="M-29-27h6v6h-6zM-19-27h6v6h-6zM-10-27h6v6h-6z" fill="#999"/><path d="M-29-18h6v4h-6zM-19-18h6v4h-6zM-10-18h6v4h-6zM-29-11h6v4h-6zM-19-11h6v4h-6zM-10-11h6v4h-6z" fill="#fff"/></svg></button>
            <button class="wide" aria-label="Export"><svg viewBox="-76 -50 152 100"><path d="M-21-26h10v24H0L-16 15-33-2h12z" fill="#333"/><path d="M-44 16v8H9v-8" fill="none" stroke="#333" stroke-width="4.500"/><path d="M47-4l9 8 9-8" fill="none" stroke="#333" stroke-width="3.500"/></svg></button>
            <button aria-label="Print"><svg viewBox="-50 -50 100 100"><path d="M-20-16v-12h40v12" fill="none" stroke="#333" stroke-width="3"/><rect x="-32" y="-12" width="64" height="24" rx="3" fill="#333"/><circle cx="23" cy="-4" r="4" fill="#fff"/><rect x="-17" y="-1" width="35" height="31" rx="3" fill="#fff" stroke="#333" stroke-width="4"/><path d="M-12 24l7-17 7 11 3-4 5 10z" fill="#333"/><circle cx="9" cy="7" r="3" fill="#333"/></svg></button>
            <button aria-label="Measure"><svg viewBox="-50 -50 100 100" fill="none" stroke="#333" stroke-width="4"><path d="M8 3h-37v18H10c13 0 19-4 19-12V-10" /><ellipse cx="10" cy="-10" rx="19" ry="13"/><ellipse cx="10" cy="-10" rx="10" ry="6"/><path d="M-24 21v-6M-18 21v-9M-12 21v-6M-6 21v-6M0 21v-9M6 21v-6M12 21v-6M18 20v-9" stroke-width="2"/></svg></button>
            <button aria-label="Angle"><svg viewBox="-50 -50 100 100" fill="none" stroke="#333" stroke-width="4"><path d="M-34 17C-34-5-20-22 0-22S34-5 34 17v4h-68z"/><path d="M-23 13C-23-2-14-10 0-10S23-2 23 13H8C8 4-8 4-8 13z" stroke-width="3.500"/><path d="M0-22v7M-12-19l2 6M12-19l-2 6M-22-12l4 5M22-12l-4 5M-29-2l5 3M29-2l-5 3M-32 8l6 1M32 8l-6 1" stroke-width="2.500"/></svg></button>
            <button aria-label="Mass properties"><svg viewBox="-50 -50 100 100"><path d="M-18-24h36M0-24v44" stroke="#333" stroke-width="3.500"/><path d="M-16-23l-7 27M-16-23l7 27M16-23L9 4M16-23l7 27" stroke="#333" stroke-width="2.500"/><path d="M-25 3h18v8h-18zM7 3h18v8H7zM-25 18h51v7h-51z" fill="#333"/></svg></button>
          </div>
        </main>
      </div>
      <nav class="tabs">
        <a href="#" class="tab on"><svg width="36" height="38" viewBox="0 0 36 38" fill="#fff" stroke="#333" stroke-width="2"><path d="M1 9h10l5 5v23H6l-5-4zM1 9l5 5h10M6 14v23M17 1h11l6 6v30H23l-6-4zM17 1l6 6h11M23 7v30"/></svg>Part Studio 1</a>
        <a href="#" class="tab"><svg width="36" height="36" viewBox="0 0 36 36" fill="#ccc" stroke="#444" stroke-width="2"><path d="M2 1h24l8 7v26H10l-8-6z" fill="#fff"/><path d="M2 1l8 7v26M10 8h24"/><path d="M10 8h15v15H10z" fill="#777"/></svg>Assembly 1</a>
      </nav>
    </div>
  </div>
  <svg class="watermark" width="356" height="130" viewBox="0 0 356 130" role="img" aria-label="XDA"><path d="M12 14h30v12H24v44h18v37L27 82H12z" fill="#f09bb0"/><path d="M56 14h31v68H56V70h19V26H56z" fill="#94d3f3"/><text x="102" y="82">XDA</text></svg>
</div>
</body>
</html>
```
FILE: styles.css
```css
* { box-sizing: border-box; }
body { margin: 0; background: linear-gradient(90deg, #000 50%, #b8b8b8 50%); font-family: Roboto, "Liberation Sans", sans-serif; font-size: 28px; color: #333; }
h1, h2, h3, ul { margin: 0; padding: 0; }
ul { list-style: none; }
b, th, h2, h3 { font-weight: 600; }
button, input { font: inherit; color: inherit; }
button { cursor: pointer; padding: 0; border: 0; }
svg { flex: none; display: block; }
.sprite { position: absolute; width: 0; height: 0; }
.plain { background: none; display: flex; align-items: center; justify-content: center; }
.app { position: relative; height: 100vh; display: flex; flex-direction: column; background: #fff; border-radius: 0 0 24px 24px; overflow: hidden; }
.caret { flex: none; border: 8px solid transparent; border-top-color: #333; border-bottom: 0; }

.topbar { flex: none; height: 80px; display: flex; align-items: center; background: #fafafa; padding: 0 12px 0 9px; }
.brand { display: flex; align-items: center; gap: 13px; color: #666; text-decoration: none; font-family: Inter, sans-serif; font-weight: 300; font-size: 34px; line-height: 40px; width: 217px; }
h1 { font-size: 44px; font-weight: 700; margin: 8px 34px 0 25px; }
.menu { margin-top: 6px; }
.branch { font-size: 30px; color: #999; margin: 12px 22px 0 0; }
.link { margin: 8px 65px 0 0; }
.globe { margin-right: 46px; }
.stat { display: flex; align-items: center; gap: 12px; font-size: 30px; width: 104px; }
.stat-b { width: 84px; gap: 26px; }
.spacer { flex: 1; }
.bell { position: relative; margin: 8px 22px 0 0; }
.badge { position: absolute; left: 17px; top: -14px; width: 32px; height: 32px; border-radius: 4px; background: #1651b0; color: #fff; font-size: 22px; font-weight: 700; line-height: 30px; }
.share { width: 119px; height: 66px; margin: 0 22px 4px 0; border-radius: 10px; background: #9fb6dc; color: #fff; font-size: 30px; }
.help { flex: none; width: 36px; height: 36px; border-radius: 50%; background: #888; color: #fff; font-size: 28px; font-weight: 700; line-height: 36px; text-align: center; }
.help.dark { background: #666; margin: 8px 14px 0 0; }
.help.dark + .caret { margin: 6px 24px 0 0; }
.help.small { width: 24px; height: 24px; font-size: 20px; line-height: 24px; background: #999; }
.avatar { margin: 8px 11px 0 0; }
.user { margin-right: 14px; }

.main { flex: 1; min-height: 0; display: flex; }
.rail { flex: none; width: 80px; background: #fafafa; border-top: 2px solid #d7d7d7; border-right: 2px solid #d7d7d7; display: flex; flex-direction: column; }
.rail .plain { position: relative; height: 70px; }
.rail .active::before { content: ""; position: absolute; left: 0; top: 0; width: 6px; height: 62px; background: #1651b0; }
.rail .rail-end { margin-top: auto; height: 60px; }
.tiny-q { fill: #fff; font-size: 14px; font-weight: 700; text-anchor: middle; }

.versions { flex: none; width: 601px; border-top: 2px solid #d7d7d7; border-right: 2px solid #d7d7d7; display: flex; flex-direction: column; }
.vhead { display: flex; align-items: center; height: 72px; padding: 0 19px 0 10px; border-bottom: 2px solid #d7d7d7; }
.vhead h2 { font-size: 30px; font-weight: 600; flex: 1; }
.cmp { margin: 0 42px 0 36px; }
.search { display: flex; align-items: center; height: 56px; margin: 12px 19px 0 20px; border: 2px solid #a6a6a6; border-radius: 6px; }
.search input { flex: 1; min-width: 0; height: 100%; border: 0; background: none; outline: 0; padding: 4px 0 0 25px; }
input::placeholder { color: #666; font-style: italic; font-weight: 300; opacity: 1; }
.search .caret { margin-right: 18px; }
.search button { width: 60px; height: 100%; border-left: 2px solid #a6a6a6; }
.toggles { display: flex; gap: 12px; padding: 14px 26px; }
.toggles button { width: 60px; height: 60px; display: grid; place-items: center; border-radius: 10px; background: #e9e9e9; box-shadow: inset 0 2px 2px #bbb, inset 0 0 0 1px #ddd; }
.history { width: 100%; border-collapse: collapse; table-layout: fixed; margin-top: 10px; color: #666; }
.history th { text-align: left; color: #333; height: 54px; padding: 0; border-bottom: 2px solid #ccd5dc; width: 155px; }
.history th.graph { width: 290px; }
.history td { padding: 11px 0 0; vertical-align: top; line-height: 42px; height: 100px; white-space: nowrap; font-size: 27px; }
.history td .tag, .history td b { font-size: 28px; }
.history td.graph svg { position: absolute; margin-left: 126px; margin-top: 0; }
.history b { color: #333; }
.history .current { background: #afdcf5; }
.more { display: inline-block; margin: 0 12px 0 5px; }
.tag { display: inline-block; border: 2px solid #1651b0; border-radius: 5px; background: #d0dae5; color: #333; font-weight: 600; padding: 0 7px; line-height: 38px; }
.legend { margin-top: auto; padding-left: 98px; }
.legend li { display: flex; align-items: center; height: 65px; gap: 14px; }
.legend span { color: #666; }
.legend .second { margin: 0 4px 0 45px; }
.legend .rel { gap: 10px; margin-left: -2px; }
.legend .third { margin-left: 44px; }
.legend .obs { gap: 10px; }
.legend .aut { gap: 8px; margin-left: -6px; }
.upgrade { align-self: center; display: flex; align-items: center; justify-content: center; gap: 8px; width: 176px; height: 54px; margin: 39px 0 35px 40px; border: 2px solid #4a7fc0; border-radius: 22px; background: #fff; font-size: 30px; }
.hint { display: flex; align-items: center; justify-content: space-between; height: 62px; padding: 0 18px 0 10px; background: #eee; border-top: 2px solid #c8c8c8; border-bottom: 2px solid #c8c8c8; color: #666; font-size: 22px; }

.work { flex: 1; min-width: 0; display: flex; flex-direction: column; }
.studio { flex: 1; min-height: 0; display: flex; }
.features { flex: none; width: 413px; margin-top: 72px; border-top: 2px solid #c8c8c8; border-right: 2px solid #d7d7d7; }
.filter { display: flex; align-items: center; gap: 25px; padding: 14px 15px 0 22px; }
.filter input { flex: 1; min-width: 0; height: 60px; border: 2px solid #a6a6a6; border-radius: 6px; padding: 2px 11px 0; font-size: 27px; }
.fhead { display: flex; align-items: center; justify-content: space-between; height: 60px; padding: 0 44px 0 9px; }
.fhead h3 { font-size: 27px; }
.scroller { display: flex; height: 1174px; overflow: hidden; margin-right: 11px; border-bottom: 2px solid #d7d7d7; }
.tree { flex: 1; font-size: 27px; }
.tree li { display: flex; align-items: center; height: 52px; gap: 11px; padding-left: 13px; color: #333; position: relative; }
.tree li svg { color: #555; }
.tree li.group { padding-left: 9px; gap: 14px; }
.tree li.nested { display: block; height: 208px; margin-left: 20px; padding-left: 17px; border-left: 2px solid #d7d7d7; }
.tree .nested li { gap: 9px; }
.nested::after { content: ""; position: absolute; left: -10px; bottom: 0; width: 18px; height: 2px; background: #d7d7d7; }
.tree li.off { color: #999; }
.tree li.off svg { opacity: .6; }
.err::after { content: ""; position: absolute; left: 27px; top: 25px; width: 24px; height: 24px; border-radius: 50%; background: linear-gradient(#fff, #fff) center / 12px 5px no-repeat, #1651b0; }
.track { width: 30px; border: solid #e4e4e4; border-width: 0 2px; background: #fafafa; padding: 6px 4px 0 6px; }
.thumb { height: 900px; border-radius: 8px; background: #c1c1c1; }
.tree li.part { padding-left: 51px; gap: 8px; }

.canvas { flex: 1; min-width: 0; position: relative; }
.scene { width: 100%; height: 100%; }
.solid path, .solid ellipse { stroke: #10181d; stroke-width: 2px; vector-effect: non-scaling-stroke; stroke-linejoin: round; }
.solid .bare ellipse, .solid [stroke="none"] { stroke: none; }
.solid .planeline { stroke: #a9c3e0; stroke-width: 4px; }
.plane-label { fill: #1a55bb; font-size: 34px; }
.plane-label.top-label { font-size: 28px; }
.notice { position: absolute; left: 50%; top: 4px; transform: translateX(-50%); margin-left: -210px; display: flex; align-items: center; width: 765px; height: 64px; padding: 0 42px; border: 2px solid #ccc; border-top: 0; border-radius: 0 0 22px 22px; background: #fff; white-space: nowrap; justify-content: space-between; }
.notice b { font-size: 29px; font-weight: 600; }
.notice button:not(.help) { width: 238px; height: 54px; margin-right: 10px; border-radius: 6px; background: #1651b0; color: #fff; font-size: 24px; }
.viewcube { position: absolute; right: 14px; top: 91px; }
.axis { font-size: 24px; font-weight: 500; }
.face { font-size: 18px; font-weight: 500; fill: #111; }
.face.front { font-size: 22px; }
.shading { position: absolute; right: 41px; top: 365px; gap: 14px; }
.handle { position: absolute; left: -2px; top: 1029px; width: 66px; height: 68px; display: grid; place-items: center; background: #fff; border: 2px solid #a6a6a6; border-left: 0; }
.toolbar { position: absolute; left: 130px; right: 130px; bottom: 48px; height: 152px; display: flex; justify-content: center; align-items: center; gap: 20px; border: 4px solid #ddd; background: #fff; }
.toolbar button { flex: none; width: 124px; height: 124px; display: grid; place-items: center; background: #fff; border: 2px solid #f4f4f4; border-radius: 8px; }
.toolbar button.wide { width: 152px; }
.toolbar svg { height: 100px; }

.tabs { flex: none; display: flex; gap: 3px; height: 60px; padding-left: 11px; background: #d7d7d7; }
.tab { display: flex; align-items: center; gap: 7px; width: 401px; height: 55px; padding: 2px 0 0 23px; background: #e9e9e9; color: #666; text-decoration: none; border-radius: 0 0 10px 10px; box-shadow: 0 2px 4px #aaa; }
.tab.on { background: #fff; color: #333; border-bottom: 5px solid #1651b0; height: 57px; }
.watermark { position: absolute; right: 8px; bottom: 18px; filter: drop-shadow(0 4px 6px rgba(0, 0, 0, .55)); }
.watermark text { fill: #fff; font: 700 94px "DejaVu Sans", sans-serif; }
```
